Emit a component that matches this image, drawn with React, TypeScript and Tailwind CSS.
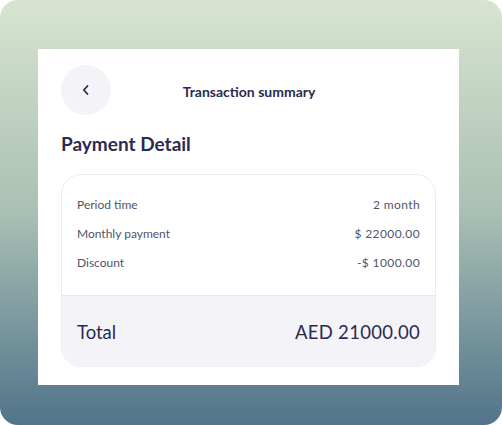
import React from "react";

export default function App() {
  return (
    <div className="w-[502px] h-[425px] bg-white" style={{ fontFamily: "Lato, 'Noto Sans', sans-serif" }}>
      <div className="w-full h-full rounded-[18px] bg-gradient-to-b from-[#d8e4d0] via-[#a9c0b4] to-[#52748a] pt-[49px] px-[38px]">
        <div className="w-[421px] h-[336px] bg-white pt-[16px] px-[23px]">
          <div className="relative flex items-center h-[50px]">
            <div className="w-[50px] h-[50px] rounded-full bg-[#f4f4f8] flex items-center justify-center">
              <svg width="10" height="12" viewBox="0 0 10 12" fill="none">
                <path d="M6.5 2 L2.8 6 L6.5 10" stroke="#2a2b4f" strokeWidth="1.8" strokeLinecap="round" strokeLinejoin="round" />
              </svg>
            </div>
            <div className="absolute left-0 right-0 top-0 h-[50px] flex items-center justify-center pointer-events-none">
              <span className="text-[14px] font-bold text-[#2a2b4f] pl-[1px] pt-[2px]">Transaction summary</span>
            </div>
          </div>
          <div className="mt-[17px] text-[19px] font-bold text-[#2a2b4f] leading-[24px]">Payment Detail</div>
          <div className="mt-[18px] w-[375px] rounded-[20px] border border-[#ececf0] overflow-hidden">
            <div className="px-[15px] pt-[21px] pb-[23px] flex flex-col gap-[11px] text-[12px] text-[#50546a] leading-[18px]">
              <div className="flex justify-between"><span>Period time</span><span className="tracking-[0.4px]">2 month</span></div>
              <div className="flex justify-between"><span>Monthly payment</span><span className="tracking-[0.4px]">$ 22000.00</span></div>
              <div className="flex justify-between"><span>Discount</span><span className="tracking-[0.4px]">-$ 1000.00</span></div>
            </div>
            <div className="border-t border-[#e6e6ec] bg-[#f4f4f8] h-[71px] px-[15px] pt-[3px] flex items-center justify-between text-[18.5px] text-[#2a2b4f]">
              <span>Total</span>
              <span className="tracking-[0.3px]">AED 21000.00</span>
            </div>
          </div>
        </div>
      </div>
    </div>
  );
}
